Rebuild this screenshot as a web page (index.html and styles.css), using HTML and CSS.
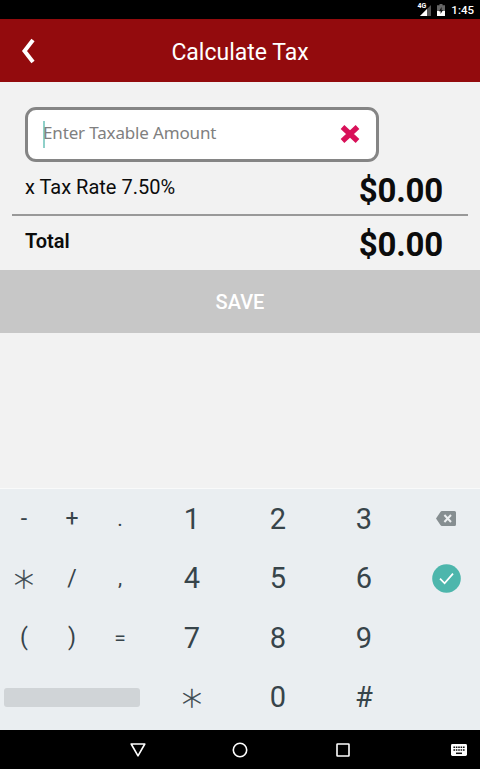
FILE: index.html
```html
<!DOCTYPE html>
<html lang="en">
<head>
    <meta charset="UTF-8">
    <meta name="viewport" content="width=device-width, initial-scale=1.0">
    <title>Calculate Tax</title>
    <link rel="stylesheet" href="styles.css">
</head>
<body>
    <div class="status-bar">
        <span class="network">4G</span>
        <svg class="signal" width="11" height="11" viewBox="0 0 11 11">
            <path d="M11 0V11H0Z" fill="#555"/>
            <path d="M7 4V11H0Z" fill="#fff"/>
        </svg>
        <svg class="battery" width="8" height="12" viewBox="0 0 8 12">
            <path d="M2.5 0h3v1.3H8V12H0V1.3h2.5z" fill="#666"/>
            <path d="M0 7h8v5H0z" fill="#fff"/>
            <path d="M4.6 3L2 7.3h1.6V10L6 6H4.6z" fill="#111"/>
        </svg>
        <span class="clock">1:45</span>
    </div>

    <header class="header">
        <button class="back-btn" aria-label="Back">
            <svg width="16" height="28" viewBox="0 0 16 28">
                <path d="M13 3L4.5 14 13 25" fill="none" stroke="#fff" stroke-width="4"/>
            </svg>
        </button>
        <h1>Calculate Tax</h1>
    </header>

    <main class="content">
        <div class="amount-box">
            <span class="caret"></span>
            <span class="placeholder">Enter Taxable Amount</span>
            <button class="clear-btn" aria-label="Clear">
                <svg width="20" height="20" viewBox="0 0 20 20">
                    <path d="M2.5 3L17.5 17M17.5 3L2.5 17" stroke="#d81159" stroke-width="5.4"/>
                </svg>
            </button>
        </div>

        <div class="row tax-row">
            <span class="label">x Tax Rate 7.50%</span>
            <span class="amount">$0.00</span>
        </div>
        <div class="row total-row">
            <span class="label">Total</span>
            <span class="amount">$0.00</span>
        </div>
    </main>

    <button class="save-btn">SAVE</button>

    <div class="keyboard">
        <span class="key small">-</span>
        <span class="key small">+</span>
        <span class="key small last">.</span>
        <span class="key">1</span>
        <span class="key">2</span>
        <span class="key">3</span>
        <span class="key action">
            <svg width="20" height="15" viewBox="0 0 20 15">
                <path d="M6 0h12.5q1.5 0 1.5 1.5v12q0 1.5-1.5 1.5H6q-1 0-1.6-.9L0 7.5 4.4.9Q5 0 6 0z" fill="#868e91"/>
                <path d="M8.4 4l6.6 7M15 4l-6.6 7" stroke="#eceff1" stroke-width="2"/>
            </svg>
        </span>

        <span class="key star">∗</span>
        <span class="key small">/</span>
        <span class="key small last">,</span>
        <span class="key">4</span>
        <span class="key">5</span>
        <span class="key">6</span>
        <span class="key action">
            <svg width="29" height="29" viewBox="0 0 29 29">
                <circle cx="14.5" cy="14.5" r="14.3" fill="#4db6ac"/>
                <path d="M8 14.7l4.6 4.6L21 9.7" fill="none" stroke="#fff" stroke-width="1.8"/>
            </svg>
        </span>

        <span class="key small">(</span>
        <span class="key small">)</span>
        <span class="key small last">=</span>
        <span class="key">7</span>
        <span class="key">8</span>
        <span class="key">9</span>
        <span class="key"></span>

        <span class="key space"></span>
        <span class="key star">∗</span>
        <span class="key">0</span>
        <span class="key">#</span>
        <span class="key"></span>
    </div>

    <nav class="nav-bar">
        <svg width="16" height="16" viewBox="0 0 16 16">
            <path d="M1.2 2h13.6L8 13.8z" fill="none" stroke="#fff" stroke-width="1.6" stroke-linejoin="round"/>
        </svg>
        <svg width="16" height="16" viewBox="0 0 16 16">
            <circle cx="8" cy="8" r="6.7" fill="none" stroke="#fff" stroke-width="1.6"/>
        </svg>
        <svg width="16" height="16" viewBox="0 0 16 16">
            <rect x="2" y="2" width="12" height="12" rx=".5" fill="none" stroke="#fff" stroke-width="1.6"/>
        </svg>
        <svg class="keyboard-icon" width="16" height="12" viewBox="0 0 16 12">
            <rect width="16" height="12" rx="1.4" fill="#fff"/>
            <path d="M2.4 3.2h11.4M2.4 6h11.4" stroke="#111" stroke-width="1.6" stroke-dasharray="1.6 .8"/>
            <path d="M5 9.3h6" stroke="#111" stroke-width="1.5"/>
        </svg>
    </nav>
</body>
</html>
```
FILE: styles.css
```css
* {
    margin: 0;
    padding: 0;
    box-sizing: border-box;
}

body {
    font-family: Roboto, 'Liberation Sans', sans-serif;
    background: #f2f2f2;
    color: #0c0c0c;
    height: 769px;
    display: flex;
    flex-direction: column;
    overflow: hidden;
}

button {
    border: none;
    background: none;
    font-family: inherit;
    cursor: pointer;
}

svg {
    display: block;
}

.status-bar {
    height: 19px;
    background: #000;
    color: #fff;
    display: flex;
    align-items: center;
    justify-content: flex-end;
    padding: 1px 6px 0 0;
}

.network {
    font-size: 7px;
    font-weight: bold;
    line-height: 7px;
    align-self: flex-start;
    margin: 2px -6px 0 0;
    z-index: 1;
}

.battery {
    margin: 0 6px 0 6px;
}

.clock {
    font-size: 11.5px;
    font-weight: 500;
    line-height: 18px;
}

.header {
    height: 63px;
    background: #930b0d;
    color: #fff;
    display: grid;
    grid-template-columns: 56px 1fr 56px;
    align-items: center;
}

.back-btn {
    padding-left: 20px;
}

h1 {
    font-size: 23px;
    font-weight: normal;
    text-align: center;
    padding-top: 3px;
}

.content {
    height: 188px;
    padding: 25px 12px 0;
}

.amount-box {
    width: 354px;
    height: 55px;
    margin-left: 13px;
    padding: 0 16px 0 15px;
    border: 3px solid #858585;
    border-radius: 11px;
    background: #fff;
    display: flex;
    align-items: center;
}

.caret {
    width: 2px;
    height: 27px;
    background: #8fd0c9;
    margin-top: -1px;
}

.placeholder {
    flex: 1;
    font-family: 'Noto Sans', sans-serif;
    font-size: 17px;
    letter-spacing: -0.15px;
    color: #808080;
    margin-left: -2px;
    margin-top: -4px;
}

.clear-btn {
    margin-top: -1px;
}

.row {
    display: flex;
    justify-content: space-between;
    padding: 0 25px 0 13px;
    line-height: 50px;
}

.tax-row {
    height: 54px;
    border-bottom: 2px solid #999;
}

.label {
    font-size: 20px;
}

.amount {
    font-size: 33px;
    font-weight: bold;
    letter-spacing: -0.2px;
    line-height: 57px;
}

.total-row .label {
    font-weight: 600;
}

.save-btn {
    height: 63px;
    background: #c7c7c7;
    color: #fff;
    font-size: 20px;
    font-weight: 500;
    padding-top: 1px;
}

.keyboard {
    margin-top: auto;
    height: 242px;
    padding-bottom: 3px;
    border-top: 1px solid #f9fafa;
    background: #eaeef1;
    color: #37444a;
    display: grid;
    grid-template-columns: 48px 48px 53px 86px 86px 86px 1fr;
    grid-template-rows: repeat(4, 59.5px);
}

.key {
    font-size: 29px;
    display: flex;
    align-items: center;
    justify-content: center;
}

.small {
    font-size: 23px;
}

.last {
    font-size: 21px;
    padding-right: 5px;
}

.star {
    font-family: 'DejaVu Sans', sans-serif;
    font-weight: 200;
    font-size: 41px;
    line-height: 40px;
    -webkit-text-stroke: 0.4px #37444a;
}

.action {
    padding-left: 5px;
}

.space {
    grid-column: span 3;
    align-self: center;
    height: 19px;
    margin: 0 9px 0 4px;
    border-radius: 3px;
    background: #d0d4d7;
}

.nav-bar {
    height: 39px;
    background: #000;
    display: grid;
    grid-template-columns: 103px 102px 103px 1fr;
    align-items: center;
    justify-items: center;
    padding-left: 86px;
}

.keyboard-icon {
    justify-self: end;
    margin-right: 13px;
}
```
